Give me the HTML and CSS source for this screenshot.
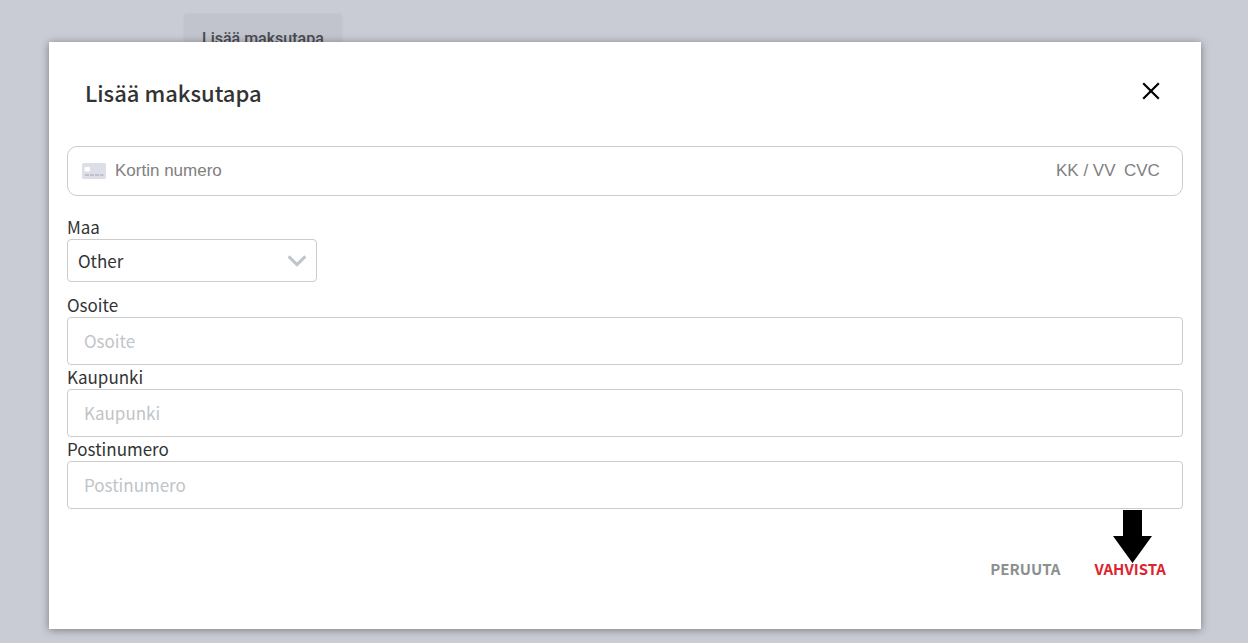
FILE: index.html
```html
<!DOCTYPE html>
<html lang="fi">
<head>
<meta charset="utf-8">
<meta name="viewport" content="width=device-width, initial-scale=1">
<title>Lisää maksutapa</title>
<link rel="stylesheet" href="styles.css">
</head>
<body>
<main class="page">
  <button class="page-button" type="button">Lisää maksutapa</button>
</main>
<div class="overlay">
  <form class="dialog" role="dialog" aria-labelledby="dialog-title">
    <header class="dialog-header">
      <h1 class="dialog-title" id="dialog-title">Lisää maksutapa</h1>
      <button class="close" type="button" aria-label="Sulje">
        <svg width="18" height="18" viewBox="0 0 18 18" fill="none" stroke="currentColor" stroke-width="2.2"><path d="M1.2 1.2 16.8 16.8M16.8 1.2 1.2 16.8"/></svg>
      </button>
    </header>
    <div class="card">
      <svg class="card-icon" width="24" height="16" viewBox="0 0 24 16"><rect width="24" height="16" rx="1.5" fill="#dcdfe8"/><rect x="2.5" y="4" width="5.5" height="4.5" rx="1" fill="#fff"/><path d="M3 12h4M8 12h4M13 12h4M18 12h3.5" stroke="#bcc1cc" stroke-width="2"/></svg>
      <input class="card-input card-number" type="text" placeholder="Kortin numero" aria-label="Kortin numero">
      <input class="card-input card-expiry" type="text" placeholder="KK / VV" aria-label="KK / VV">
      <input class="card-input card-cvc" type="text" placeholder="CVC" aria-label="CVC">
    </div>
    <div class="field">
      <label class="label" for="country">Maa</label>
      <div class="select-wrap">
        <select class="select" id="country"><option>Other</option></select>
        <svg class="chevron" width="20" height="12" viewBox="0 0 20 12" fill="none" stroke="#bfc5ca" stroke-width="3"><path d="M1.6 1.4 10 9.6 18.4 1.4"/></svg>
      </div>
    </div>
    <div class="fields">
      <div class="field">
        <label class="label" for="address">Osoite</label>
        <input class="input" id="address" type="text" placeholder="Osoite">
      </div>
      <div class="field">
        <label class="label" for="city">Kaupunki</label>
        <input class="input" id="city" type="text" placeholder="Kaupunki">
      </div>
      <div class="field">
        <label class="label" for="zip">Postinumero</label>
        <input class="input" id="zip" type="text" placeholder="Postinumero">
      </div>
    </div>
    <footer class="actions">
      <button class="action" type="button">PERUUTA</button>
      <button class="action action-primary" type="submit">VAHVISTA
        <svg class="arrow" width="39" height="53" viewBox="0 0 39 53" aria-hidden="true"><path d="M10 0h19v26h10L19.5 53 0 26h10z"/></svg>
      </button>
    </footer>
  </form>
</div>
</body>
</html>
```
FILE: styles.css
```css
* {
  box-sizing: border-box;
}

body {
  margin: 0;
  background: #c9ccd4;
  color: #333;
  font-family: "Noto Sans CJK SC", "Noto Sans", sans-serif;
  font-size: 17px;
  line-height: 24px;
}

button,
input,
select {
  margin: 0;
  font: inherit;
}

button {
  padding: 0;
  border: 0;
  background: none;
  cursor: pointer;
}

.page {
  padding: 14px 184px;
}

.page-button {
  height: 50px;
  padding: 0 18px;
  border-radius: 4px;
  background: #c1c4cc;
  box-shadow: 0 0 2px #b9bcc4;
  color: #4a4c52;
  font-family: Roboto, sans-serif;
  font-size: 16px;
  font-weight: 500;
}

.overlay {
  position: absolute;
  top: 0;
  left: 0;
  width: 100%;
  padding: 42px 47px 14px 49px;
}

.dialog {
  padding: 30px 18px 48px;
  background: #fff;
  box-shadow: 0 1px 8px rgba(0, 0, 0, 0.4);
}

.dialog-header {
  display: flex;
  align-items: flex-start;
  justify-content: space-between;
  padding: 0 23px 0 18px;
}

.dialog-title {
  margin: 4px 0 8px;
  color: #333;
  font-size: 22px;
  font-weight: 500;
  line-height: 32px;
}

.close {
  display: flex;
  margin-top: 10px;
  color: #000;
}

.card {
  display: flex;
  align-items: center;
  height: 50px;
  margin-top: 30px;
  padding: 0 20px 0 14px;
  border: 1px solid #ccc;
  border-radius: 10px;
}

.card-icon {
  flex: none;
  margin-right: 9px;
}

.card-input {
  min-width: 0;
  padding: 0;
  border: 0;
  background: none;
  font-family: "Liberation Sans", Arial, sans-serif;
  font-size: 17px;
}

.card-input::placeholder {
  color: #808080;
}

.card-number {
  flex: 1;
}

.card-expiry {
  width: 68px;
}

.card-cvc {
  width: 38px;
}

.card + .field {
  margin-top: 19px;
}

.label {
  display: block;
}

.select-wrap {
  position: relative;
  width: 250px;
}

.select {
  display: block;
  width: 100%;
  height: 43px;
  padding: 0 40px 0 10px;
  border: 1px solid #ccc;
  border-radius: 4px;
  background: #fff;
  color: #333;
  appearance: none;
}

.chevron {
  position: absolute;
  top: 16px;
  right: 10px;
  pointer-events: none;
}

.fields {
  margin-top: 11px;
}

.input {
  display: block;
  width: 100%;
  height: 48px;
  padding: 0 16px 2px;
  border: 1px solid #ccc;
  border-radius: 4px;
  background: #fff;
  color: #333;
}

.input::placeholder {
  color: #c0c4c8;
}

.actions {
  display: flex;
  justify-content: flex-end;
  gap: 34px;
  padding: 48px 17px 0 0;
}

.action {
  position: relative;
  color: #8c8f8f;
  font-size: 15px;
  font-weight: 700;
  line-height: 24px;
}

.action-primary {
  color: #dc2430;
}

.arrow {
  position: absolute;
  bottom: 18px;
  left: 19px;
}
```
